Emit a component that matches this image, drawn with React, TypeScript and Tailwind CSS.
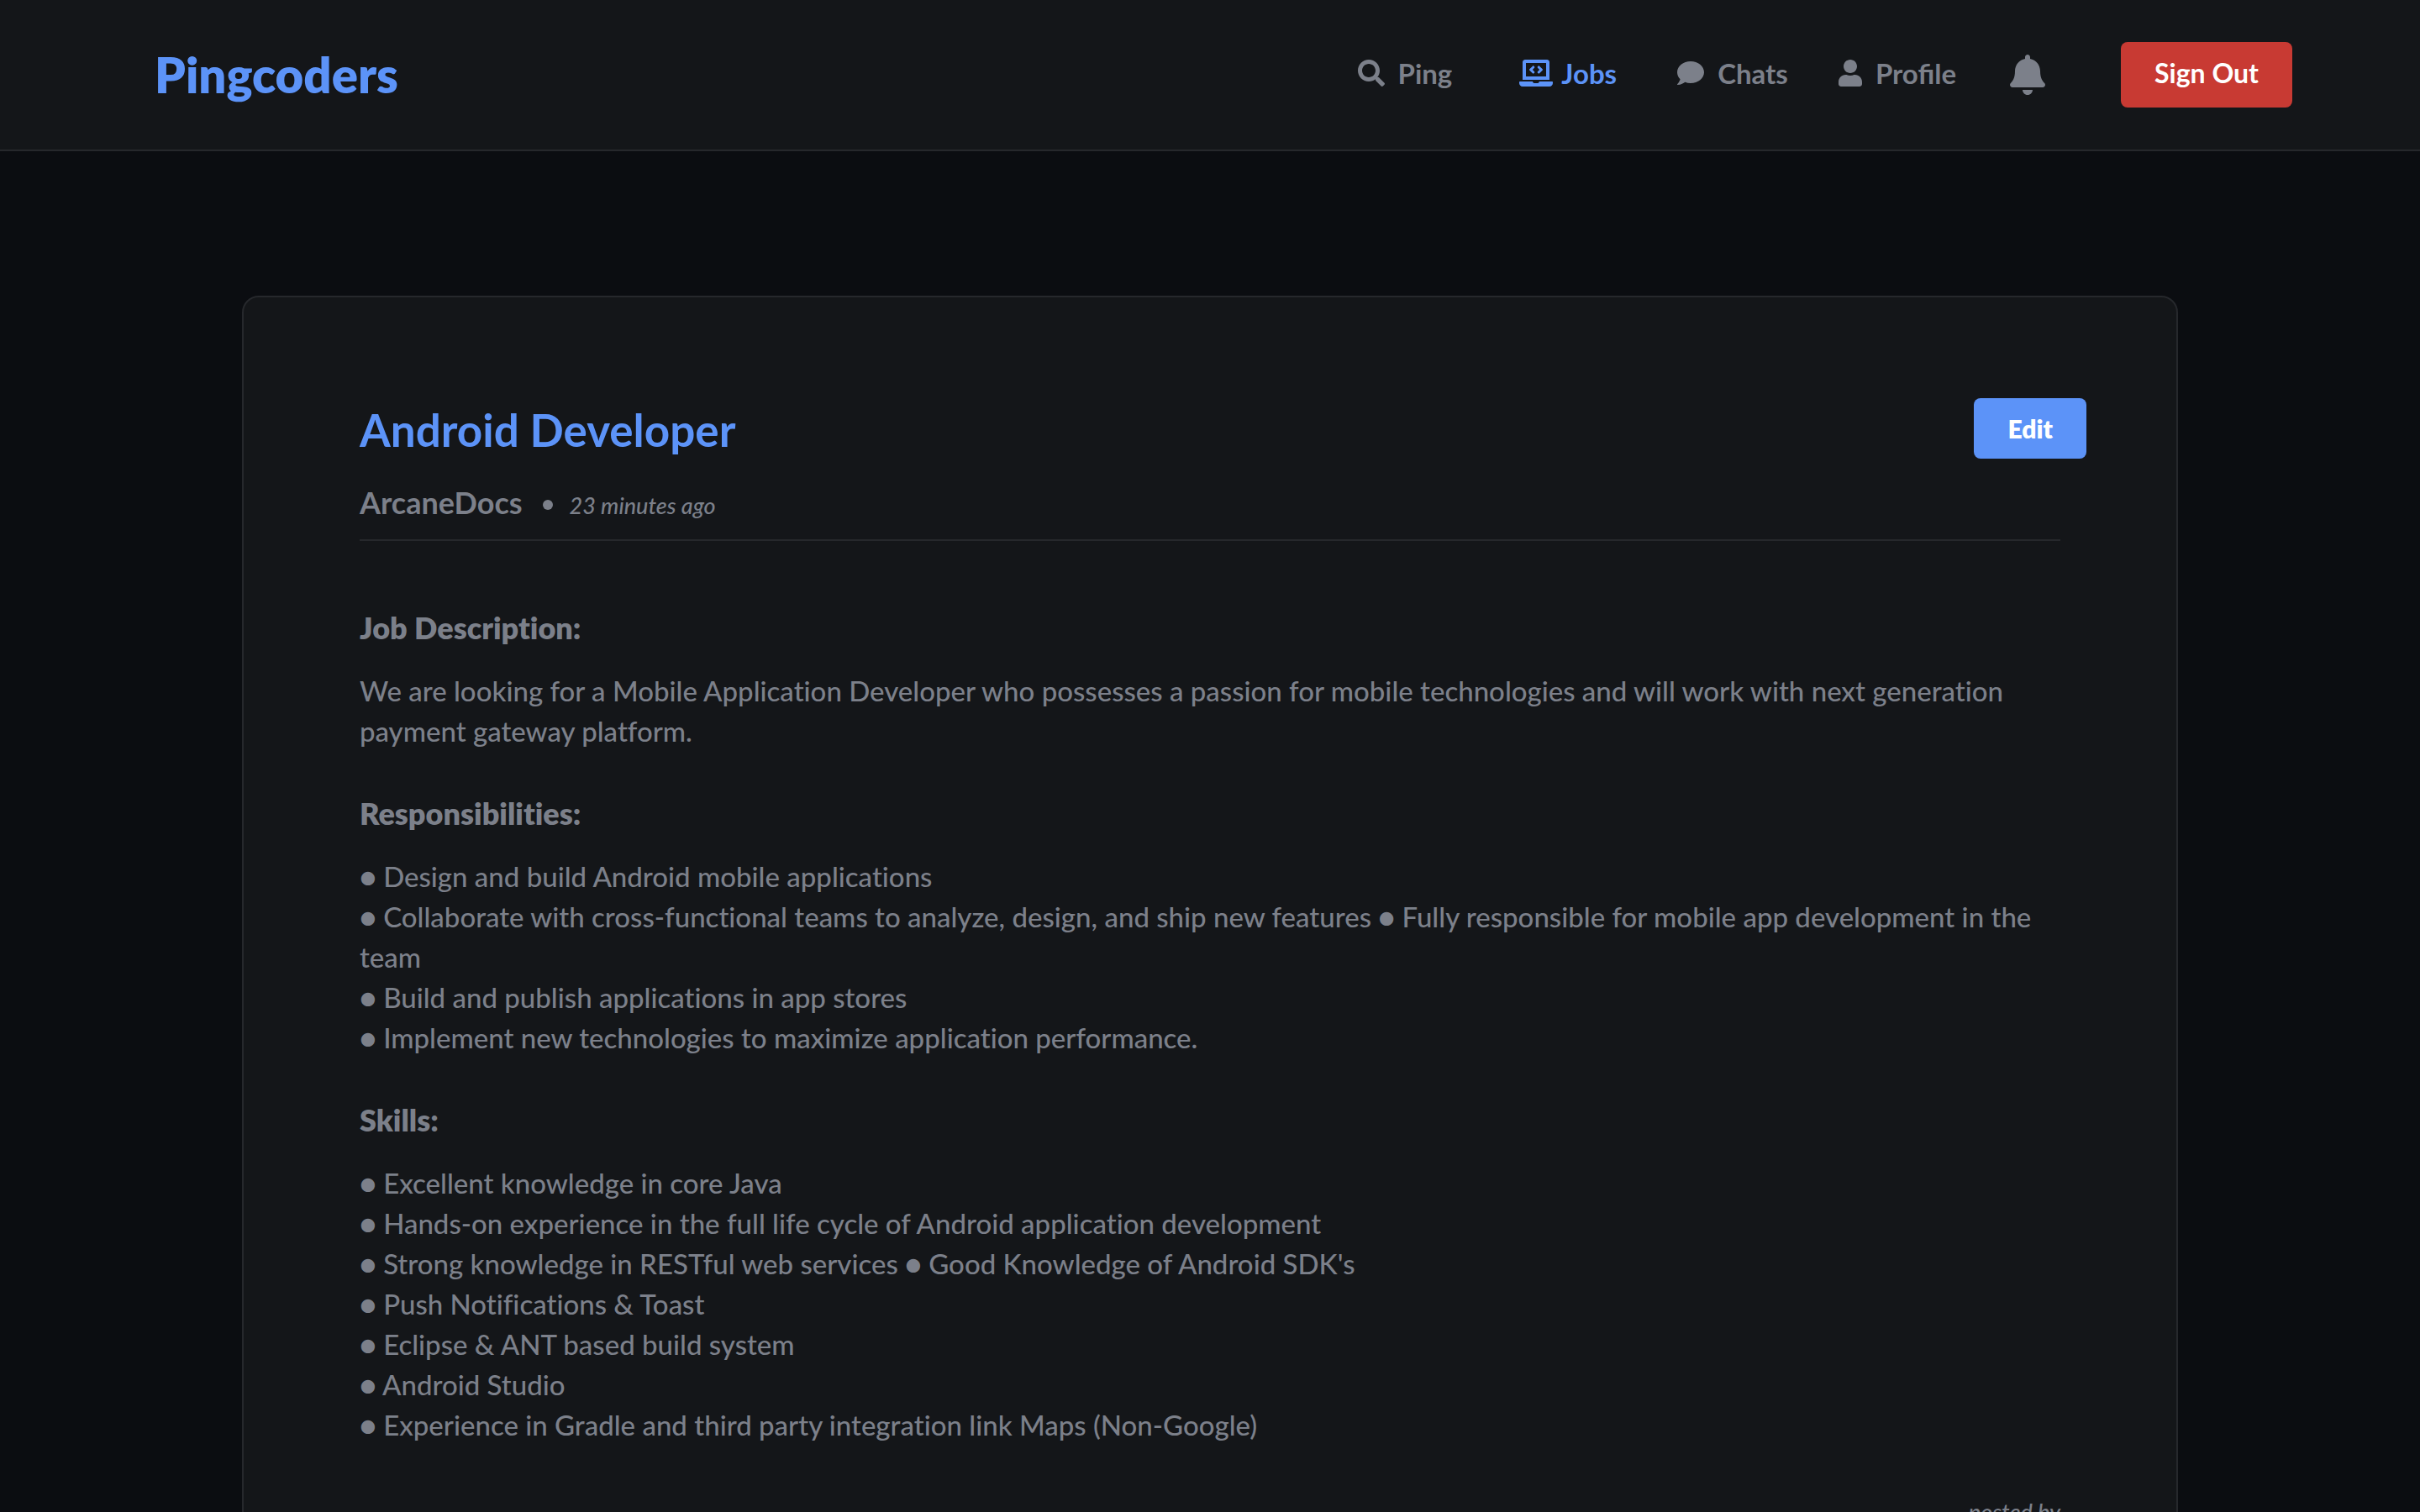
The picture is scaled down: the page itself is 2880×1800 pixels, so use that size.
import React from "react";
import { FaBell, FaComment, FaLaptopCode, FaSearch, FaUser } from "react-icons/fa";

type NavItem = {
  label: string;
  icon: React.ReactNode;
  className: string;
  active?: boolean;
};

const navItems: NavItem[] = [
  { label: "Ping", icon: <FaSearch className="size-8" />, className: "gap-4" },
  { label: "Jobs", icon: <FaLaptopCode className="h-8 w-10" />, className: "ml-20 gap-2.5", active: true },
  { label: "Chats", icon: <FaComment className="size-8" />, className: "ml-18 gap-4" },
  { label: "Profile", icon: <FaUser className="h-8 w-7" />, className: "ml-15 gap-4" },
];

const sections: { title: string; lines: string[] }[] = [
  {
    title: "Job Description:",
    lines: [
      "We are looking for a Mobile Application Developer who possesses a passion for mobile technologies and will work with next generation payment gateway platform.",
    ],
  },
  {
    title: "Responsibilities:",
    lines: [
      "● Design and build Android mobile applications",
      "● Collaborate with cross-functional teams to analyze, design, and ship new features ● Fully responsible for mobile app development in the team",
      "● Build and publish applications in app stores",
      "● Implement new technologies to maximize application performance.",
    ],
  },
  {
    title: "Skills:",
    lines: [
      "● Excellent knowledge in core Java",
      "● Hands-on experience in the full life cycle of Android application development",
      "● Strong knowledge in RESTful web services ● Good Knowledge of Android SDK's",
      "● Push Notifications & Toast",
      "● Eclipse & ANT based build system",
      "● Android Studio",
      "● Experience in Gradle and third party integration link Maps (Non-Google)",
    ],
  },
];

function Header() {
  return (
    <header className="flex h-[180px] items-center justify-between border-b-2 border-[#26282c] bg-[#141619] pl-[184px] pr-[152px]">
      <a href="#home" className="text-[58px] leading-[72px] font-extrabold text-[#5c93f8]">
        Pingcoders
      </a>
      <nav className="flex items-center">
        {navItems.map((item) => (
          <a
            key={item.label}
            href={"#" + item.label.toLowerCase()}
            aria-current={item.active ? "page" : undefined}
            className={
              "flex items-center pb-1 text-[33px] leading-10 font-bold " +
              item.className +
              (item.active ? " text-[#5c93f8]" : "")
            }
          >
            {item.icon}
            {item.label}
          </a>
        ))}
        <button type="button" aria-label="Notifications" className="ml-16">
          <FaBell className="h-12 w-[42px]" />
        </button>
        <button
          type="button"
          className="ml-[90px] h-[78px] rounded-lg bg-[#c83a33] px-10 pb-1 text-[32px] leading-10 font-bold text-white"
        >
          Sign Out
        </button>
      </nav>
    </header>
  );
}

function JobCard() {
  return (
    <article className="mx-auto mt-[172px] w-4/5 rounded-[20px] border-2 border-[#26282c] bg-[#141619] px-[138px] pt-30 pb-30 [font-variant-ligatures:no-common-ligatures]">
      <div className="-mr-[31px] flex items-center justify-between">
        <h1 className="pt-1 text-[53px] leading-[64px] font-bold text-[#5c93f8]">Android Developer</h1>
        <button
          type="button"
          className="h-[72px] rounded-lg bg-[#5c93f8] px-10 text-[30px] leading-10 font-extrabold text-white"
        >
          Edit
        </button>
      </div>
      <div className="mt-7 flex items-baseline border-b-2 border-[#26282c] pb-5">
        <span className="text-4xl leading-[48px] font-bold">ArcaneDocs</span>
        <span className="mt-1.5 mr-5 ml-6 size-3 self-center rounded-full bg-[#7c808a]" />
        <time className="text-[27px] leading-10 font-medium italic">23 minutes ago</time>
      </div>
      <div className="mt-[79px] flex flex-col gap-[50px]">
        {sections.map((section) => (
          <section key={section.title}>
            <h2 className="text-4xl leading-[48px] font-extrabold">{section.title}</h2>
            <div className="mt-[27px] text-[33px] leading-[48px] font-medium">
              {section.lines.map((line) => (
                <p key={line}>{line}</p>
              ))}
            </div>
          </section>
        ))}
      </div>
      <p className="mt-15 text-right text-[27px] leading-10 font-medium italic">posted by</p>
    </article>
  );
}

export default function App() {
  return (
    <div className="h-screen overflow-hidden bg-[#0b0d11] font-['Lato',sans-serif] text-[#7c808a]">
      <Header />
      <main>
        <JobCard />
      </main>
    </div>
  );
}
